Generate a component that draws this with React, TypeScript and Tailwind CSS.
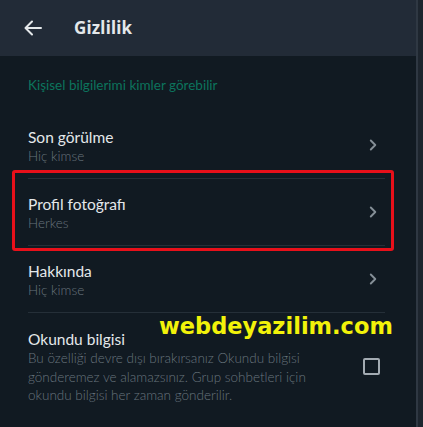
import React from "react";

const Chevron = () => (
  <svg width="8" height="12" viewBox="0 0 8 12" className="shrink-0">
    <path d="M1.8 1.5 L6.3 6 L1.8 10.5" fill="none" stroke="#858f97" strokeWidth="1.9" strokeLinecap="round" strokeLinejoin="round" />
  </svg>
);

function Row({ title, sub, last }: { title: string; sub: string; last?: boolean }) {
  return (
    <div className="h-[67px] pl-[28px] pr-[31px]">
      <div className={`h-full flex items-center ${last ? "" : "border-b border-[#252f38]"}`}>
        <div className="flex-1 flex flex-col pt-[1px]">
          <div className="text-[15.5px] leading-[20px] text-[#e4e8ea]">{title}</div>
          <div className="text-[13.5px] leading-[18px] text-[#68747d] font-light">{sub}</div>
        </div>
        <div className="pr-[8px]">
          <Chevron />
        </div>
      </div>
    </div>
  );
}

export default function App() {
  return (
    <div
      className="w-[423px] h-[427px] flex bg-[#1d252e] relative overflow-hidden"
      style={{ fontFamily: 'Lato, "Noto Sans", sans-serif' }}
    >
      <div className="w-[416px] h-full flex flex-col bg-[#111a22]">
        <div className="h-[56px] bg-[#222b37] flex items-center shrink-0">
          <svg width="18" height="16" viewBox="0 0 18 16" className="ml-[24px]">
            <path d="M17 8 H2 M8 1.5 L1.5 8 L8 14.5" fill="none" stroke="#e4e8ea" strokeWidth="2" strokeLinecap="round" strokeLinejoin="round" />
          </svg>
          <div
            className="ml-[32px] text-[17px] font-bold text-[#e4e8ea] tracking-[0.2px]"
            style={{ fontFamily: '"Noto Sans", sans-serif' }}
          >
            Gizlilik
          </div>
        </div>
        <div className="pl-[28px] pt-[20px] h-[56px] text-[13.5px] leading-[18px] text-[#0c745d]">
          Kişisel bilgilerimi kimler görebilir
        </div>
        <Row title="Son görülme" sub="Hiç kimse" />
        <Row title="Profil fotoğrafı" sub="Herkes" />
        <Row title="Hakkında" sub="Hiç kimse" />
        <div className="pl-[28px] pr-[36px] pt-[16px] flex items-center">
          <div className="flex-1">
            <div className="text-[15.5px] leading-[20px] text-[#e4e8ea]">Okundu bilgisi</div>
            <div className="text-[13.5px] leading-[18.5px] text-[#68747d] font-light w-[290px]">
              Bu özelliği devre dışı bırakırsanız Okundu bilgisi gönderemez ve alamazsınız. Grup sohbetleri için okundu bilgisi her zaman gönderilir.
            </div>
          </div>
          <div className="w-[17px] h-[17px] border-2 border-[#a3abb2] rounded-[2px] ml-[8px]" />
        </div>
      </div>
      <div className="w-[2px] h-full bg-[#2f3843]" />
      <div className="absolute left-[12px] top-[170px] w-[382px] h-[81px] border-[3px] border-[#e8101a] rounded-[3px]" />
      <div
        className="absolute left-[159px] top-[311px] text-[22.5px] font-bold text-[#f2f20a] leading-[30px]"
        style={{ fontFamily: '"DejaVu Sans", sans-serif' }}
      >
        webdeyazilim.com
      </div>
    </div>
  );
}
